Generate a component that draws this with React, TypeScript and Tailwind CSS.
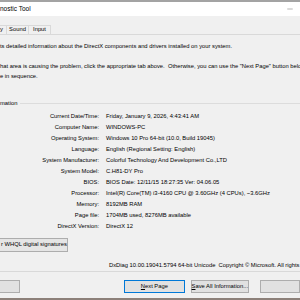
import { Minus } from 'lucide-react';

const rows: [string, string][] = [
  ['Current Date/Time:', 'Friday, January 9, 2026, 4:43:41 AM'],
  ['Computer Name:', 'WINDOWS-PC'],
  ['Operating System:', 'Windows 10 Pro 64-bit (10.0, Build 19045)'],
  ['Language:', 'English (Regional Setting: English)'],
  ['System Manufacturer:', 'Colorful Technology And Development Co.,LTD'],
  ['System Model:', 'C.H81-DY Pro'],
  ['BIOS:', 'BIOS Date: 12/11/15 18:27:35 Ver: 04.06.05'],
  ['Processor:', 'Intel(R) Core(TM) i3-4160 CPU @ 3.60GHz (4 CPUs), ~3.6GHz'],
  ['Memory:', '8192MB RAM'],
  ['Page file:', '1704MB used, 8276MB available'],
  ['DirectX Version:', 'DirectX 12'],
];

export default function App() {
  return (
    <div className="w-[300px] h-[300px] overflow-hidden flex flex-col bg-[#f0f0f0] text-black font-['Liberation_Sans',Arial,sans-serif] text-[5.8px] whitespace-nowrap">
      <div className="h-[2px] bg-[#a3a3a3]" />

      {/* title bar */}
      <div className="h-[14px] bg-white flex items-center justify-between pr-[6px]">
        <span className="text-[6.5px] leading-[14px]">nostic Tool</span>
        <Minus size={8} strokeWidth={1.2} className="text-[#444]" />
      </div>

      {/* tabs */}
      <div className="mt-[9px] h-[10px] flex border-b border-[#d9d9d9]">
        <div className="w-[7px] border-t border-r border-[#d9d9d9] flex items-center leading-none">y</div>
        <div className="w-[22px] border-t border-r border-[#d9d9d9] flex items-center justify-center leading-none">Sound</div>
        <div className="w-[22px] border-t border-r border-[#d9d9d9] flex items-center justify-center leading-none">Input</div>
        <div className="flex-1" />
      </div>

      {/* description */}
      <div className="mt-[6px] h-[10px] leading-[10px]">ts detailed information about the DirectX components and drivers installed on your system.</div>
      <div className="mt-[10px] h-[10px] leading-[10px] whitespace-pre">hat area is causing the problem, click the appropriate tab above.  Otherwise, you can use the "Next Page" button below to visit each page in sequence.</div>
      <div className="h-[10px] leading-[10px]">e in sequence.</div>

      {/* group box */}
      <div className="mt-[17px] h-[10px] flex items-center gap-[3px]">
        <span className="leading-[10px]">mation</span>
        <div className="flex-1 h-px bg-[#dcdcdc]" />
      </div>
      <div className="mt-[3px] grid grid-cols-[99px_1fr] gap-x-[7px]">
        {rows.map(([label, value]) => (
          <div key={label} className="contents">
            <div className="h-[11px] leading-[11px] text-right">{label}</div>
            <div className="h-[11px] leading-[11px]">{value}</div>
          </div>
        ))}
      </div>

      <div className="mt-[6px] w-[68px] h-[14px] flex items-center border-t border-r border-b border-[#adadad] bg-[#e5e5e5] pl-px leading-none">
        r WHQL digital signatures
      </div>

      <div className="mt-[8px] h-[10px] leading-[10px] pl-[109px] whitespace-pre">DxDiag 10.00.19041.5794 64-bit Unicode  Copyright © Microsoft. All rights reserved.</div>
      <div className="mt-px h-px bg-[#d9d9d9]" />

      {/* buttons */}
      <div className="mt-[8px] h-[13px] flex">
        <button className="w-[23px] border border-l-0 border-[#adadad] bg-[#e1e1e1]" />
        <button className="ml-[104px] w-[69px] border border-[#0078d7] bg-[#e1e1e1] leading-none">
          <span className="underline">N</span>ext Page
        </button>
        <button className="ml-[6px] w-[64px] border border-[#adadad] bg-[#e1e1e1] leading-none">
          <span className="underline">S</span>ave All Information...
        </button>
        <button className="ml-[11px] w-[40px] shrink-0 border border-[#adadad] bg-[#e1e1e1]" />
      </div>

      <div className="flex-1" />
      <div className="h-[2px] bg-[#8c8079]" />
    </div>
  );
}
